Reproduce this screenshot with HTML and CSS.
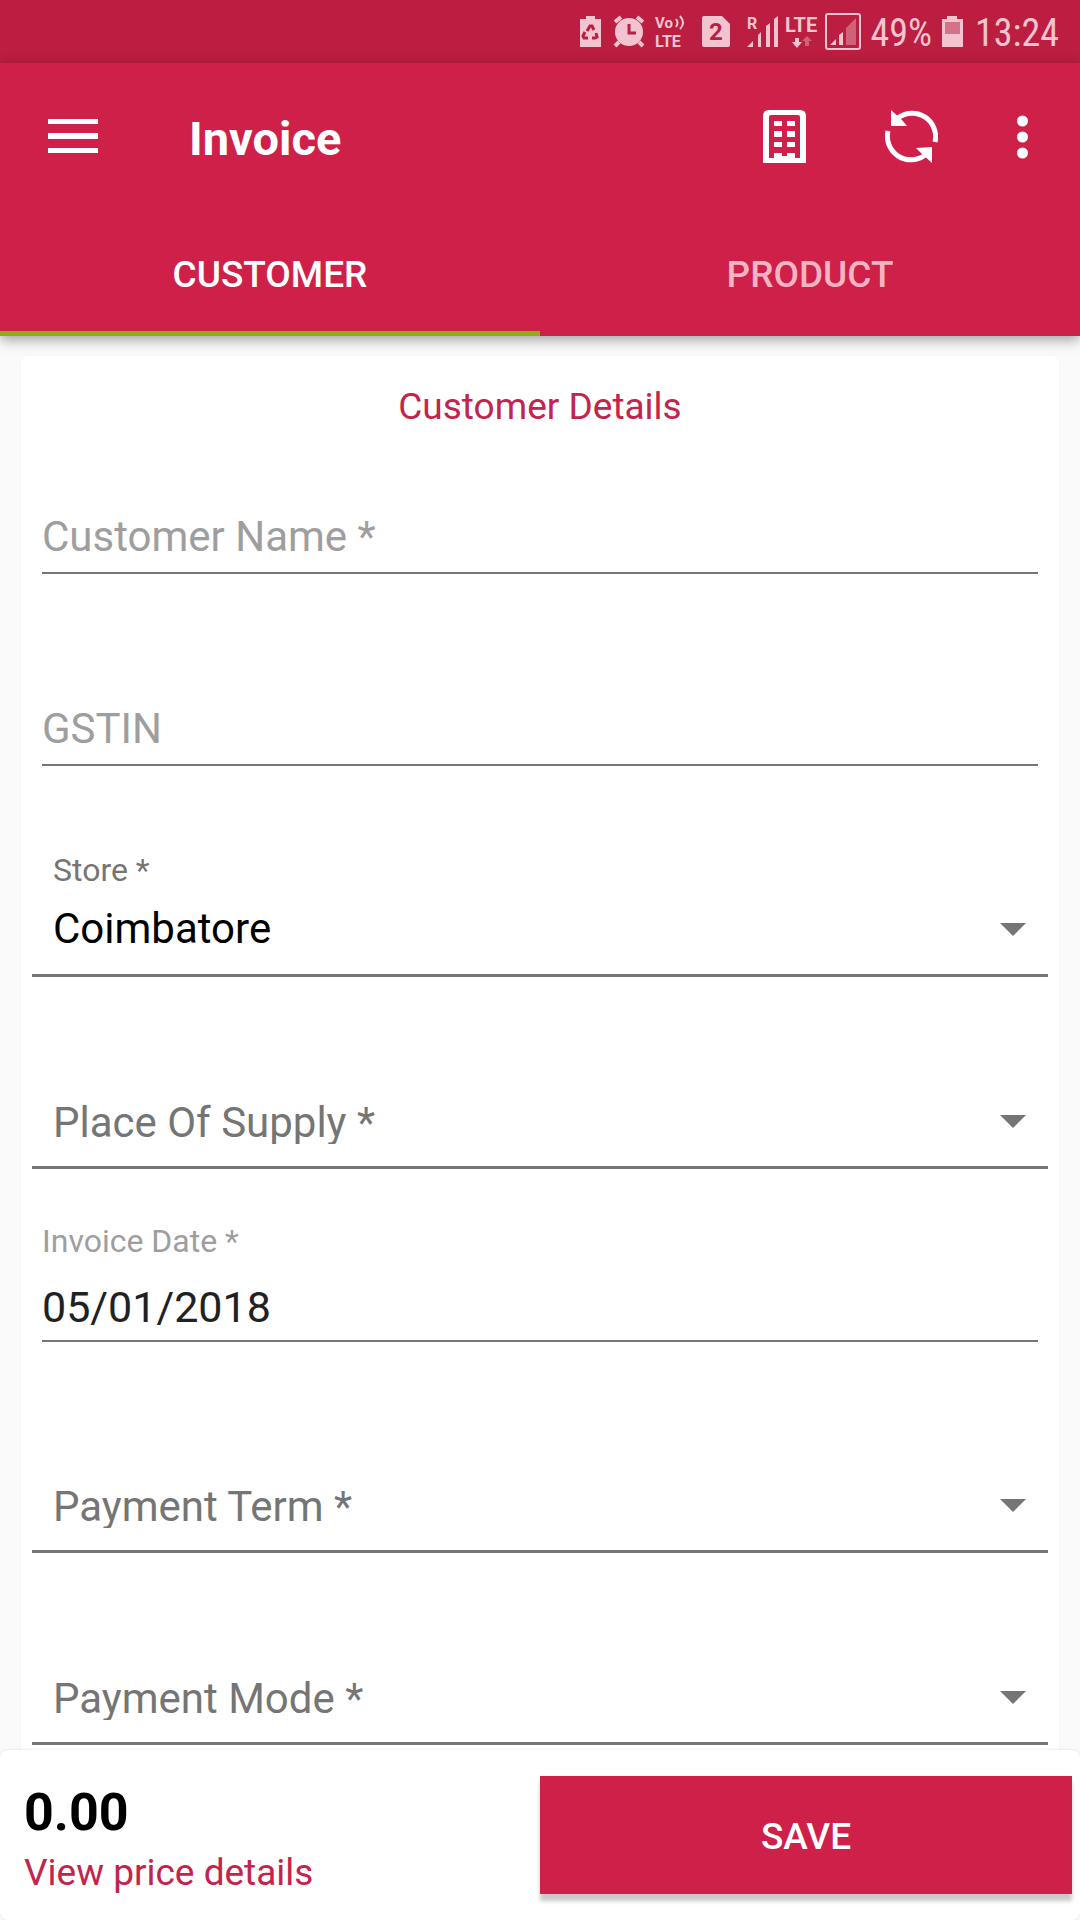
FILE: index.html
```html
<!DOCTYPE html>
<html lang="en">
<head>
    <meta charset="UTF-8">
    <meta name="viewport" content="width=device-width, initial-scale=1.0">
    <title>Invoice</title>
    <link rel="stylesheet" href="styles.css">
</head>
<body>
    <!-- Phone status bar -->
    <div class="status-bar">
        <svg width="29" height="64" viewBox="579 0 29 64">
            <path fill="currentColor" d="M586 16h9v3h6v28h-21V19h6z"/>
            <g fill="none" stroke="#bb1e40" stroke-width="3">
                <path d="M587 31l3-5h2l2 4M596 33l1 4-2 1h-3M588 38h-4l-1-2 2-4"/>
            </g>
        </svg>
        <svg width="42" height="64" viewBox="608 0 42 64">
            <circle cx="629" cy="32" r="14" fill="currentColor"/>
            <path d="M615 22l6-5M643 22l-6-5M619 42l-4 4M639 42l4 4" stroke="currentColor" stroke-width="4"/>
            <path d="M629 24v9h7" fill="none" stroke="#bb1e40" stroke-width="3"/>
        </svg>
        <svg width="44" height="64" viewBox="650 0 44 64" fill="currentColor">
            <text class="icon-text" x="655" y="28" font-size="15">Vo</text>
            <text class="icon-text" x="655" y="47" font-size="16">LTE</text>
            <path d="M676 19q3 4 0 8M680 16q6 7 0 13" fill="none" stroke="currentColor" stroke-width="2"/>
        </svg>
        <svg width="45" height="64" viewBox="694 0 45 64">
            <path fill="currentColor" d="M704 16h18l8 8v21q0 2-2 2h-24q-2 0-2-2V18q0-2 2-2z"/>
            <text class="icon-text" x="709" y="40" font-size="24" fill="#bb1e40">2</text>
        </svg>
        <svg width="43" height="64" viewBox="739 0 43 64" fill="currentColor">
            <text class="icon-text" x="747" y="29" font-size="16">R</text>
            <path d="M747 47l6-6v6zM758 35l3-3v15h-3zM766 26l4-3v24h-4zM774 19l4-3v31h-4z"/>
        </svg>
        <svg width="40" height="64" viewBox="782 0 40 64" fill="currentColor">
            <text class="icon-text" x="785" y="32" font-size="20">LTE</text>
            <path d="M795 38h4v4h3l-5 6-5-6h3z"/>
            <path d="M807 36l5 5h-3v5h-4v-5h-3z" opacity=".4"/>
        </svg>
        <svg width="42" height="64" viewBox="822 0 42 64" fill="currentColor">
            <rect x="826" y="14" width="34" height="35" rx="2" fill="none" stroke="currentColor" stroke-width="2"/>
            <path d="M830 45l6-6v6zM839 35l4-3v13h-4z"/>
            <path d="M846 28l10-10v27h-10z" opacity=".4"/>
        </svg>
        <span class="battery-level">49%</span>
        <svg width="21" height="64" viewBox="942 0 21 64" fill="currentColor">
            <path d="M947 16h10v3h6v28h-21V19h5z"/>
            <path fill="#d2738a" d="M945 22h15v12h-15z"/>
        </svg>
        <span class="clock">13:24</span>
    </div>

    <header class="app-bar">
        <div class="toolbar">
            <button type="button" class="icon-btn" aria-label="Menu">
                <svg width="50" height="36" viewBox="0 0 50 36" fill="currentColor">
                    <path d="M0 0h50v5H0zM0 14h50v6H0zM0 29h50v5H0z"/>
                </svg>
            </button>
            <h1>Invoice</h1>
            <div class="actions">
                <button type="button" class="icon-btn" aria-label="Company">
                    <svg width="43" height="53" viewBox="0 0 43 53" fill="currentColor">
                        <path fill-rule="evenodd" d="M6 0h31q6 0 6 6v47H0V6q0-6 6-6zM8 5q-2 0-2 2v41h31V7q0-2-2-2z"/>
                        <path d="M11 11h8v5h-8zM24 11h8v5h-8zM11 21h8v6h-8zM24 21h8v6h-8zM11 32h8v5h-8zM24 32h8v5h-8zM11 43h8v3h5v-3h8v6H11z"/>
                    </svg>
                </button>
                <button type="button" class="icon-btn" aria-label="Refresh">
                    <svg width="53" height="53" viewBox="0 0 53 53">
                        <path d="M13.5 7.5A23.5 23.5 0 0 1 50 32M3 21A23.5 23.5 0 0 0 39.5 45.5" fill="none" stroke="currentColor" stroke-width="5"/>
                        <path d="M6 0v16h16l-5-6zM47 53V37l-16 1 5 5z" fill="currentColor"/>
                    </svg>
                </button>
                <button type="button" class="icon-btn" aria-label="More options">
                    <svg width="11" height="44" viewBox="0 0 11 44" fill="currentColor">
                        <circle cx="5.5" cy="6" r="5.5"/>
                        <circle cx="5.5" cy="22" r="5.5"/>
                        <circle cx="5.5" cy="38" r="5.5"/>
                    </svg>
                </button>
            </div>
        </div>
        <nav class="tabs">
            <button type="button" class="tab active">CUSTOMER</button>
            <button type="button" class="tab">PRODUCT</button>
        </nav>
    </header>

    <main class="content">
        <form id="invoiceForm" class="card">
            <h2>Customer Details</h2>

            <div class="field">
                <input type="text" id="customerName" placeholder="Customer Name *" aria-label="Customer Name">
            </div>

            <div class="field">
                <input type="text" id="gstin" placeholder="GSTIN" aria-label="GSTIN">
            </div>

            <div class="field spinner">
                <label for="store">Store *</label>
                <div class="select-box">
                    <select id="store">
                        <option>Coimbatore</option>
                    </select>
                </div>
            </div>

            <div class="field spinner empty">
                <div class="select-box">
                    <select id="placeOfSupply" aria-label="Place Of Supply">
                        <option>Place Of Supply *</option>
                    </select>
                </div>
            </div>

            <div class="field">
                <label for="invoiceDate">Invoice Date *</label>
                <input type="text" id="invoiceDate" value="05/01/2018">
            </div>

            <div class="field spinner empty">
                <div class="select-box">
                    <select id="paymentTerm" aria-label="Payment Term">
                        <option>Payment Term *</option>
                    </select>
                </div>
            </div>

            <div class="field spinner empty">
                <div class="select-box">
                    <select id="paymentMode" aria-label="Payment Mode">
                        <option>Payment Mode *</option>
                    </select>
                </div>
            </div>
        </form>
    </main>

    <!-- Total and save -->
    <footer class="bottom-bar">
        <div class="total">
            <strong>0.00</strong>
            <a href="#">View price details</a>
        </div>
        <button type="submit" form="invoiceForm" class="save">SAVE</button>
    </footer>
</body>
</html>
```
FILE: styles.css
```css
/* Resetting default styles */
* {
    margin: 0;
    padding: 0;
    box-sizing: border-box;
}

body {
    display: flex;
    flex-direction: column;
    height: 100vh;
    background: #fafafa;
    font-family: Roboto, sans-serif;
    overflow: hidden;
}

button,
input,
select {
    font-family: inherit;
    border: none;
    border-radius: 0;
    background: none;
    outline: none;
}

svg {
    display: block;
    flex-shrink: 0;
}

/* Status bar */
.status-bar {
    display: flex;
    flex-shrink: 0;
    justify-content: flex-end;
    align-items: center;
    height: 63px;
    padding-right: 21px;
    background: #bb1e40;
    color: #f2c4cf;
    font-family: "Roboto Condensed", Roboto, sans-serif;
    font-size: 38px;
    line-height: 60px;
}

.icon-text {
    font-family: Roboto, sans-serif;
    font-weight: 700;
}

.battery-level {
    margin: 0 10px 0 7px;
    padding-top: 3px;
}

.clock {
    margin-left: 12px;
    padding-top: 3px;
}

/* App bar */
.app-bar {
    position: relative;
    flex-shrink: 0;
    background: #cf2049;
    color: #fff;
    box-shadow: 0 4px 12px rgba(0, 0, 0, 0.35);
}

.toolbar {
    display: flex;
    align-items: center;
    height: 147px;
    padding: 0 52px 0 48px;
}

.toolbar h1 {
    margin-left: 91px;
    padding-top: 4px;
    font-size: 47px;
    line-height: 56px;
    font-weight: bold;
}

.actions {
    display: flex;
    align-items: center;
    gap: 79px;
    margin-left: auto;
}

.icon-btn {
    color: #fff;
    cursor: pointer;
}

.tabs {
    display: flex;
}

.tab {
    flex: 1;
    height: 126px;
    padding-top: 7px;
    border-bottom: 5px solid transparent;
    color: #f6b4c2;
    font-size: 37px;
    font-weight: 500;
    cursor: pointer;
}

.tab.active {
    color: #fff;
    border-bottom-color: #8fae12;
}

/* Form card */
.content {
    flex: 1;
    min-height: 0;
    padding: 20px 21px 0;
    overflow: hidden;
}

.card {
    display: flex;
    flex-direction: column;
    gap: 48px;
    padding: 29px 11px 48px;
    border-radius: 6px;
    background: #fff;
    box-shadow: 0 0 2px rgba(0, 0, 0, 0.06);
}

.card h2 {
    margin-bottom: -28px;
    color: #c4234b;
    font-size: 37px;
    line-height: 44px;
    font-weight: normal;
    text-align: center;
}

.field {
    position: relative;
    display: flex;
    flex-direction: column;
    justify-content: flex-end;
    min-height: 144px;
    padding: 0 10px 19px;
}

.field label {
    margin-bottom: 25px;
    color: #9e9e9e;
    font-size: 32px;
    line-height: 36px;
}

.field input {
    height: 58px;
    padding-bottom: 10px;
    border-bottom: 2px solid #777;
    color: #212121;
    font-size: 43px;
}

.field input:placeholder-shown {
    height: 61px;
    padding-bottom: 13px;
    font-size: 42px;
}

.field input::placeholder {
    color: #9e9e9e;
    opacity: 1;
}

/* Drop-downs */
.spinner {
    padding: 0 21px 20px;
    border-bottom: 3px solid #757575;
}

.spinner label {
    margin-bottom: 18px;
    color: #757575;
}

.select-box {
    height: 48px;
    overflow: hidden;
}

.select-box select {
    display: block;
    width: 100%;
    height: 48px;
    padding-bottom: 2px;
    appearance: none;
    color: #000;
    font-size: 42px;
    line-height: 46px;
}

.spinner::after {
    content: "";
    position: absolute;
    right: 22px;
    bottom: 38px;
    border: 13px solid transparent;
    border-top-color: #757575;
    border-bottom: none;
    pointer-events: none;
}

.spinner.empty {
    padding-bottom: 22px;
}

.empty .select-box {
    height: 44px;
}

.empty select {
    color: #757575;
}

/* Bottom bar */
.bottom-bar {
    position: relative;
    display: flex;
    flex-shrink: 0;
    align-items: flex-start;
    padding: 26px 8px 25px 0;
    border-radius: 8px;
    background: #fff;
    box-shadow: 0 0 3px rgba(0, 0, 0, 0.12);
}

.total {
    display: flex;
    flex: 0 0 50%;
    flex-direction: column;
    gap: 4px;
    padding: 3px 0 0 24px;
}

.total strong {
    font-size: 52px;
    line-height: 68px;
}

.total a {
    color: #c4234b;
    font-size: 37px;
    line-height: 44px;
    text-decoration: none;
}

.bottom-bar .total {
    flex-basis: calc(50% + 4px);
}

.save {
    flex: 1;
    height: 118px;
    padding-top: 2px;
    background: #cf2049;
    color: #fff;
    font-size: 37px;
    font-weight: 500;
    box-shadow: 0 7px 4px rgba(90, 70, 75, 0.3);
    cursor: pointer;
}
```
